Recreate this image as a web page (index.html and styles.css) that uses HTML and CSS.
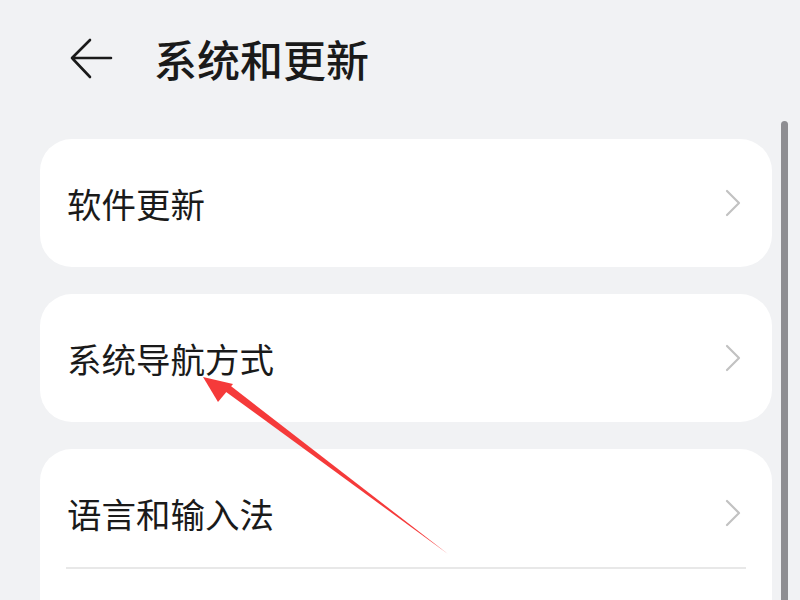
FILE: index.html
```html
<!DOCTYPE html>
<html>
<head>
<title>系统和更新</title>
<link rel="stylesheet" href="styles.css">
</head>
<body>

<div class="header">
  <svg class="back" width="44" height="42" viewBox="0 0 44 42">
    <path d="M42 20H3M21 2L3 20L21 39" fill="none" stroke="#1a1a1a" stroke-width="2.6" stroke-linecap="round" stroke-linejoin="round"/>
  </svg>
  <h1 class="title">系统和更新</h1>
</div>

<div class="list">
  <div class="card">
    <div class="row">
      <span class="label">软件更新</span>
      <svg class="chev" width="16" height="28" viewBox="0 0 16 28"><path d="M2 2L14 14L2 26" fill="none" stroke="#c2c2c2" stroke-width="2.2" stroke-linecap="round" stroke-linejoin="round"/></svg>
    </div>
  </div>
  <div class="card">
    <div class="row">
      <span class="label">系统导航方式</span>
      <svg class="chev" width="16" height="28" viewBox="0 0 16 28"><path d="M2 2L14 14L2 26" fill="none" stroke="#c2c2c2" stroke-width="2.2" stroke-linecap="round" stroke-linejoin="round"/></svg>
    </div>
  </div>
  <div class="card group">
    <div class="row">
      <span class="label">语言和输入法</span>
      <svg class="chev" width="16" height="28" viewBox="0 0 16 28"><path d="M2 2L14 14L2 26" fill="none" stroke="#c2c2c2" stroke-width="2.2" stroke-linecap="round" stroke-linejoin="round"/></svg>
    </div>
    <div class="row"></div>
  </div>
</div>

<div class="scrollbar"></div>

<svg class="pointer" width="800" height="600" viewBox="0 0 800 600">
  <polygon points="222,389 227,383 448,554" fill="#f53a3a"/>
  <polygon points="203,377 218,402 233,384" fill="#f53a3a"/>
</svg>

</body>
</html>
```

FILE: styles.css
```css
body {
    margin: 0;
    background-color: #f1f2f4;
    font-family: "Noto Sans CJK SC", "Noto Sans", sans-serif;
    color: #1a1a1a;
    height: 600px;
    overflow: hidden;
}
.header {
    display: flex;
    align-items: center;
    height: 118px;
    padding-left: 69px;
}
.back {
    display: block;
    margin-right: 41px;
}
.title {
    margin: 0;
    font-size: 43px;
    font-weight: 500;
    line-height: 1;
    margin-top: -2px;
}
.list {
    display: flex;
    flex-direction: column;
    gap: 27px;
    padding: 21px 28px 0 40px;
}
.card {
    background-color: #ffffff;
    border-radius: 32px;
}
.row {
    display: flex;
    align-items: center;
    justify-content: space-between;
    height: 128px;
    padding: 0 31px 0 27px;
}
.label {
    font-size: 34.5px;
    line-height: 1;
}
.chev {
    display: block;
}
.group .row {
    box-sizing: border-box;
    height: 118px;
    padding-top: 10px;
    margin: 0 26px;
    padding-left: 1px;
    padding-right: 5px;
}
.group .row + .row {
    border-top: 2px solid #e8e8e8;
}
.scrollbar {
    position: absolute;
    left: 781px;
    top: 121px;
    width: 7px;
    height: 500px;
    border-radius: 4px 4px 0 0;
    background-color: #8e8e92;
}
.pointer {
    position: absolute;
    left: 0;
    top: 0;
}
```
